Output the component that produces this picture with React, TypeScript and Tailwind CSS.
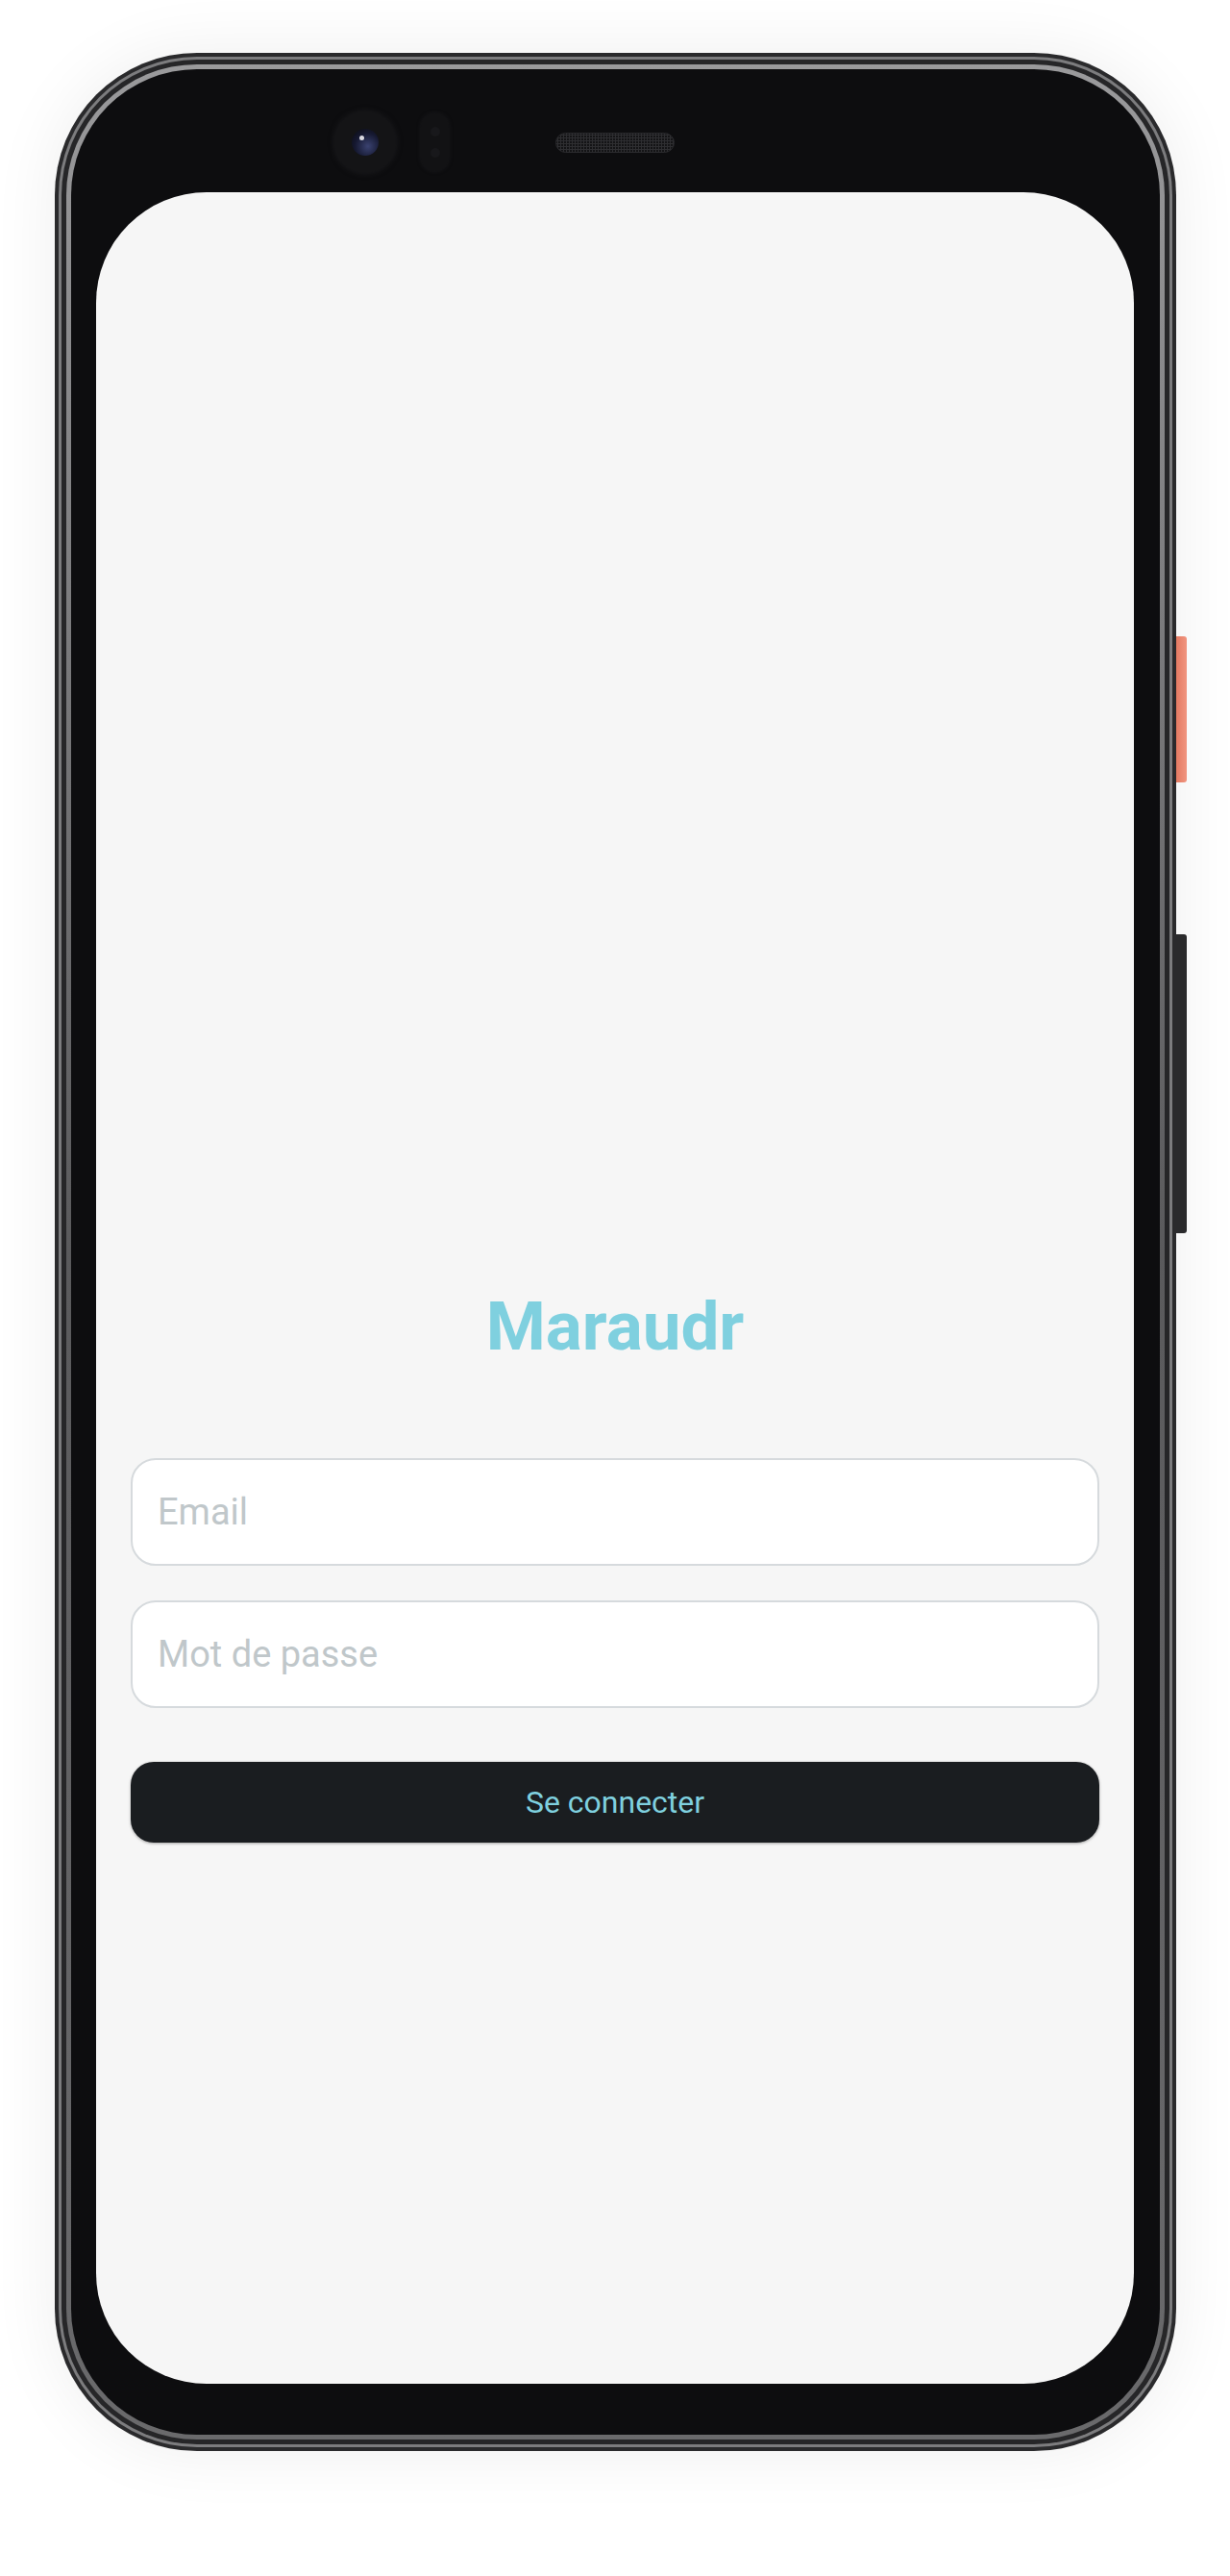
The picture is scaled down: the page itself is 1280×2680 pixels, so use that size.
import React from "react";

// Login screen shown inside a phone mockup
const Camera: React.FC = () => (
  <div className="ml-[248px] flex h-[64px] w-[64px] items-center justify-center rounded-full bg-[#141416] shadow-[0_0_6px_rgba(40,40,44,0.6)]">
    <div className="relative flex h-[28px] w-[28px] items-center justify-center rounded-full bg-[radial-gradient(circle_at_60%_65%,#3a4270_0%,#151830_55%,#0a0a0c_100%)]">
      <div className="absolute left-[8px] top-[7px] h-[5px] w-[5px] rounded-full bg-[#d8d8e0]" />
    </div>
  </div>
);

const Sensor: React.FC = () => (
  <div className="ml-[26px] flex h-[60px] w-[29px] flex-col items-center justify-around rounded-full bg-[#121214] py-[8px] shadow-[0_0_4px_rgba(40,40,44,0.5)]">
    <div className="h-[10px] w-[10px] rounded-full bg-[#18181b]" />
    <div className="h-[10px] w-[10px] rounded-full bg-[#18181b]" />
  </div>
);

const Speaker: React.FC = () => (
  <div className="ml-[111px] h-[21px] w-[124px] rounded-full border border-[#2a2a2d] bg-[#141416] bg-[radial-gradient(circle,#2e2e31_1px,transparent_1.2px)] bg-[length:3px_3px]" />
);

const LoginScreen: React.FC = () => {
  return (
    <div className="flex h-[2280px] w-[1080px] flex-col items-stretch rounded-[115px] bg-[#f6f6f6] px-[36px] pt-[1144px] font-['Roboto',sans-serif]">
      <h1 className="text-center text-[71px] font-bold leading-none text-[#7fd0df]">Maraudr</h1>

      <input
        type="email"
        placeholder="Email"
        className="mt-[102px] h-[112px] w-full rounded-[26px] border-2 border-[#d6dadd] bg-white px-[26px] text-[38px] text-gray-700 outline-none placeholder:text-[#c0c7ca]"
      />
      <input
        type="password"
        placeholder="Mot de passe"
        className="mt-[36px] h-[112px] w-full rounded-[26px] border-2 border-[#d6dadd] bg-white px-[26px] text-[38px] text-gray-700 outline-none placeholder:text-[#c0c7ca]"
      />

      <button className="mt-[56px] flex h-[84px] w-full items-center justify-center rounded-[24px] bg-[#1a1d20] text-[32px] text-[#7fd0df] shadow-[0_1px_3px_rgba(0,0,0,0.35)]">
        Se connecter
      </button>
    </div>
  );
};

const App: React.FC = () => {
  return (
    <div className="flex h-[2680px] w-[1280px] items-start bg-white pl-[57px] pt-[55px]">
      {/* phone body with its metal rim */}
      <div className="rounded-[148px] bg-[#2a2a2c] p-[4px] shadow-[0_0_70px_rgba(0,0,0,0.07)]">
        <div className="rounded-[144px] bg-[#7c7c7e] p-[3px]">
          <div className="rounded-[141px] bg-[#262628] p-[5px]">
            <div className="rounded-[136px] bg-gradient-to-b from-[#9a9a9c] via-[#5a5a5c] to-[#6a6a6c] p-[5px]">
              <div className="flex flex-col rounded-[131px] bg-[#0d0d0f] pb-[53px] pl-[26px] pr-[27px]">
                {/* top bezel: camera, sensor, earpiece */}
                <div className="flex h-[128px] items-center pt-[24px]">
                  <Camera />
                  <Sensor />
                  <Speaker />
                </div>
                <LoginScreen />
              </div>
            </div>
          </div>
        </div>
      </div>

      {/* side buttons */}
      <div className="flex flex-col">
        <div className="mt-[607px] h-[152px] w-[11px] rounded-r-[3px] bg-gradient-to-r from-[#e47a62] to-[#f19580]" />
        <div className="mt-[158px] h-[311px] w-[11px] rounded-r-[3px] bg-[#2a2a2c]" />
      </div>
    </div>
  );
};

export default App;
